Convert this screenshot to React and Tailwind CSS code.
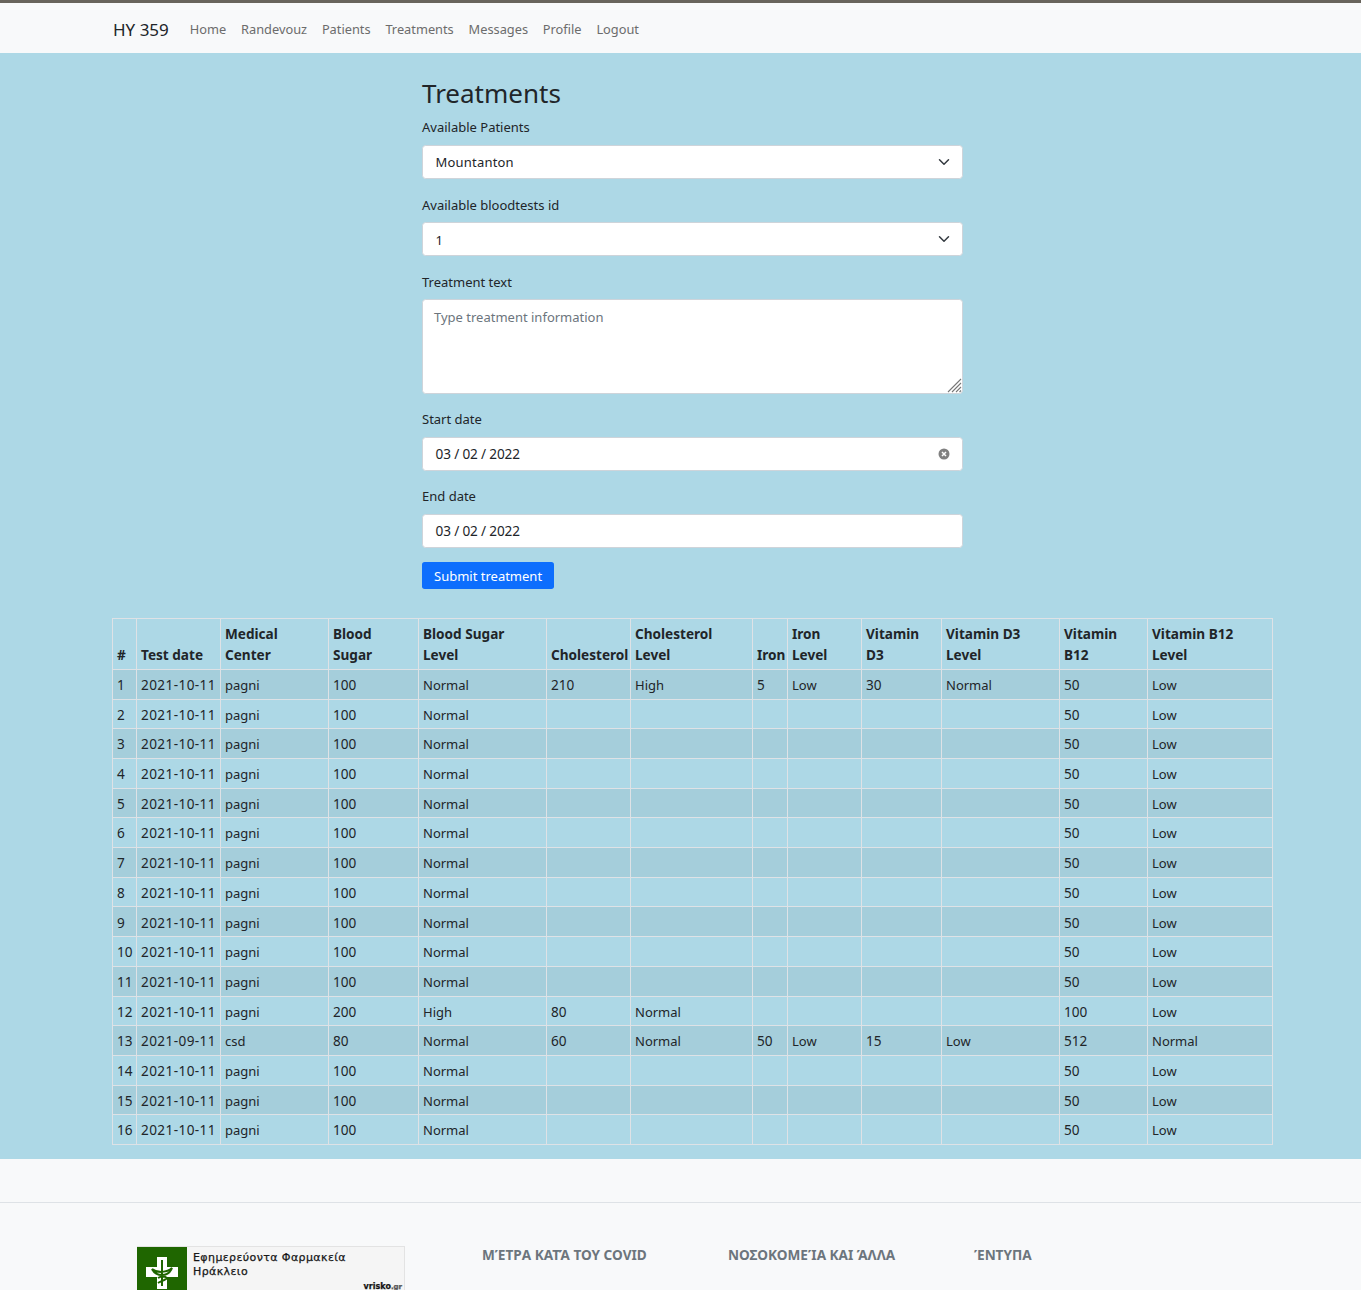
const columns = [
  { w: 24, label: "#" },
  { w: 84, label: "Test date" },
  { w: 108, label: ["Medical", "Center"] },
  { w: 90, label: ["Blood", "Sugar"] },
  { w: 128, label: ["Blood Sugar", "Level"] },
  { w: 84, label: "Cholesterol" },
  { w: 122, label: ["Cholesterol", "Level"] },
  { w: 35, label: "Iron" },
  { w: 74, label: ["Iron", "Level"] },
  { w: 80, label: ["Vitamin", "D3"] },
  { w: 118, label: ["Vitamin D3", "Level"] },
  { w: 88, label: ["Vitamin", "B12"] },
  { w: 125, label: ["Vitamin B12", "Level"] },
];

const basic = ["2021-10-11", "pagni", "100", "Normal", "", "", "", "", "", "", "50", "Low"];

const rows = [
  ["2021-10-11", "pagni", "100", "Normal", "210", "High", "5", "Low", "30", "Normal", "50", "Low"],
  basic, basic, basic, basic, basic, basic, basic, basic, basic, basic,
  ["2021-10-11", "pagni", "200", "High", "80", "Normal", "", "", "", "", "100", "Low"],
  ["2021-09-11", "csd", "80", "Normal", "60", "Normal", "50", "Low", "15", "Low", "512", "Normal"],
  basic, basic, basic,
];

const navLinks = ["Home", "Randevouz", "Patients", "Treatments", "Messages", "Profile", "Logout"];

function cellSize(v) {
  if (v.includes("-")) return "text-[13.6px] tracking-[0.4px] pt-[1px]";
  if (/^\d+$/.test(v)) return "text-[13.6px] pt-[1px]";
  return "text-[13px] pt-[3px]";
}

function Chevron() {
  return (
    <svg viewBox="0 0 16 16" className="w-[12px] h-[12px]" fill="none">
      <path d="M2 5l6 6 6-6" stroke="#343a40" strokeWidth="2" strokeLinecap="round" strokeLinejoin="round" />
    </svg>
  );
}

function Label({ children, className = "pt-[1px] mb-[6px]" }) {
  return <div className={"text-[13px] leading-[21.6px] text-[#212529] " + className}>{children}</div>;
}

function Box({ children, right, date }) {
  return (
    <div className="h-[34px] bg-white border border-[#ced4da] rounded-[3.6px] pl-[12.5px] pr-[12px] flex items-center justify-between text-[#212529]">
      <span className={date ? "text-[13.6px] tracking-[-0.15px]" : "pt-[2px] text-[13px] tracking-[0.2px]"}>{children}</span>
      {right}
    </div>
  );
}

function Logo() {
  return (
    <div className="w-[268px] h-[60px] flex bg-[#f5f5f5] border border-l-0 border-[#e3e3e3] shrink-0">
      <div className="w-[50px] bg-[#1f6600] flex items-start justify-center pt-[10px] shrink-0">
        <svg viewBox="0 0 32 32" className="w-[32px] h-[32px]">
          <path d="M11 0h10v10h11v10H21v12H11V20H0V10h11z" fill="#fff" />
          <path d="M16 3v26M6 12c5 4 15 4 20-1-2 5-6 7-10 7s-8-2-10-6zM12 21c3-2 7-2 9 0-1 2-6 3-9 5" stroke="#1f6600" strokeWidth="2" fill="none" />
        </svg>
      </div>
      <div className="relative flex-1 pl-[6px] pt-[4px] font-['DejaVu_Sans',sans-serif] text-[11px] leading-[14px] tracking-[0.4px] text-[#111] [-webkit-text-stroke:0.25px_#222]">
        <div>Εφημερεύοντα Φαρμακεία</div>
        <div>Ηράκλειο</div>
        <span className="absolute right-[2px] top-[33px] text-[8px] font-bold tracking-normal">vrisko<span className="text-[7px] text-[#666]">.gr</span></span>
      </div>
    </div>
  );
}

export default function App() {
  return (
    <div className="h-[1290px] overflow-hidden bg-[#f8f9fa] font-['Noto_Sans',sans-serif] text-[#212529]">
      <div className="h-[3px] bg-[#68645c]" />
      <nav className="h-[50px] bg-[#f8f9fa] flex items-center pl-[113px] pt-[3px]">
        <span className="text-[17px] mr-[21px] text-[#212529]">HY 359</span>
        <div className="flex gap-[14.8px] text-[12.8px] text-[#6c6c6c]">
          {navLinks.map((link) => (
            <a key={link}>{link}</a>
          ))}
        </div>
      </nav>

      <main className="bg-[#add8e6] h-[1106px] pt-[21px]">
        <div className="w-[541px] ml-[422px]">
          <h1 className="text-[26px] leading-[38px]">Treatments</h1>
          <div className="mt-[4px]">
            <Label>Available Patients</Label>
          </div>
          <div className="mb-[15px]">
            <Box right={<Chevron />}>Mountanton</Box>
          </div>
          <div className="mb-[14px]">
            <Label>Available bloodtests id</Label>
            <Box right={<Chevron />}>
              <div className="pt-[2px]">1</div>
            </Box>
          </div>
          <div className="mb-[15px]">
            <Label className="pt-[2px] mb-[5px]">Treatment text</Label>
            <div className="relative h-[95px] bg-white border border-[#ced4da] rounded-[3.6px] px-[11px] pt-[8px] text-[13px] text-[#6c757d]">
              Type treatment information
              <svg viewBox="0 0 15 15" className="absolute right-0 bottom-0 w-[15px] h-[15px]" stroke="#777" strokeWidth="1.1">
                <path d="M1 14L14 1M5 14l9-9M9 14l5-5M12.5 14l1.5-1.5" />
              </svg>
            </div>
          </div>
          <div className="mb-[14px]">
            <Label className="mb-[7px]">Start date</Label>
            <Box
              date
              right={
                <svg viewBox="0 0 12 12" className="w-[12px] h-[12px]">
                  <circle cx="6" cy="6" r="5.5" fill="#808080" />
                  <path d="M4 4l4 4M8 4l-4 4" stroke="#fff" strokeWidth="1.5" />
                </svg>
              }
            >
              03 / 02 / 2022
            </Box>
          </div>
          <div className="mb-[14px]">
            <Label>End date</Label>
            <Box date>03 / 02 / 2022</Box>
          </div>
          <button className="h-[27px] px-[12px] pt-[2px] bg-[#0d6efd] text-white text-[13px] rounded-[2.7px]">Submit treatment</button>
        </div>

        <table className="ml-[112px] mt-[29px] w-[1160px] table-fixed border-collapse whitespace-nowrap text-[13.6px]">
          <colgroup>
            {columns.map((c, i) => (
              <col key={i} style={{ width: c.w }} />
            ))}
          </colgroup>
          <thead>
            <tr>
              {columns.map((c, i) => (
                <th key={i} className="border border-[#dee2e6] px-[4px] pb-[4px] pt-[4px] h-[51px] align-bottom text-left font-bold leading-[21px]">
                  {Array.isArray(c.label) ? c.label.map((l) => <div key={l}>{l}</div>) : c.label}
                </th>
              ))}
            </tr>
          </thead>
          <tbody>
            {rows.map((r, i) => (
              <tr key={i} className={i % 2 === 0 ? "bg-[#a5cedb]" : ""}>
                <td className="border border-[#dee2e6] px-[4px] h-[29.7px] pt-[1px] pb-0 leading-[21.6px]">{i + 1}</td>
                {r.map((v, j) => (
                  <td key={j} className={"border border-[#dee2e6] px-[4px] h-[29.7px] pb-0 leading-[21.6px] " + cellSize(v)}>{v}</td>
                ))}
              </tr>
            ))}
          </tbody>
        </table>
      </main>

      <div className="h-[43px]" />
      <footer className="border-t border-[#dee2e6] pt-[43px] flex pl-[137px]">
        <Logo />
        <div className="flex text-[13.6px] font-bold text-[#6c757d] leading-[18px] uppercase">
          <span className="ml-[77px] w-[246px]">Μέτρα κατά του Covid</span>
          <span className="w-[246px]">Νοσοκομεία και Άλλα</span>
          <span>Έντυπα</span>
        </div>
      </footer>
    </div>
  );
}
